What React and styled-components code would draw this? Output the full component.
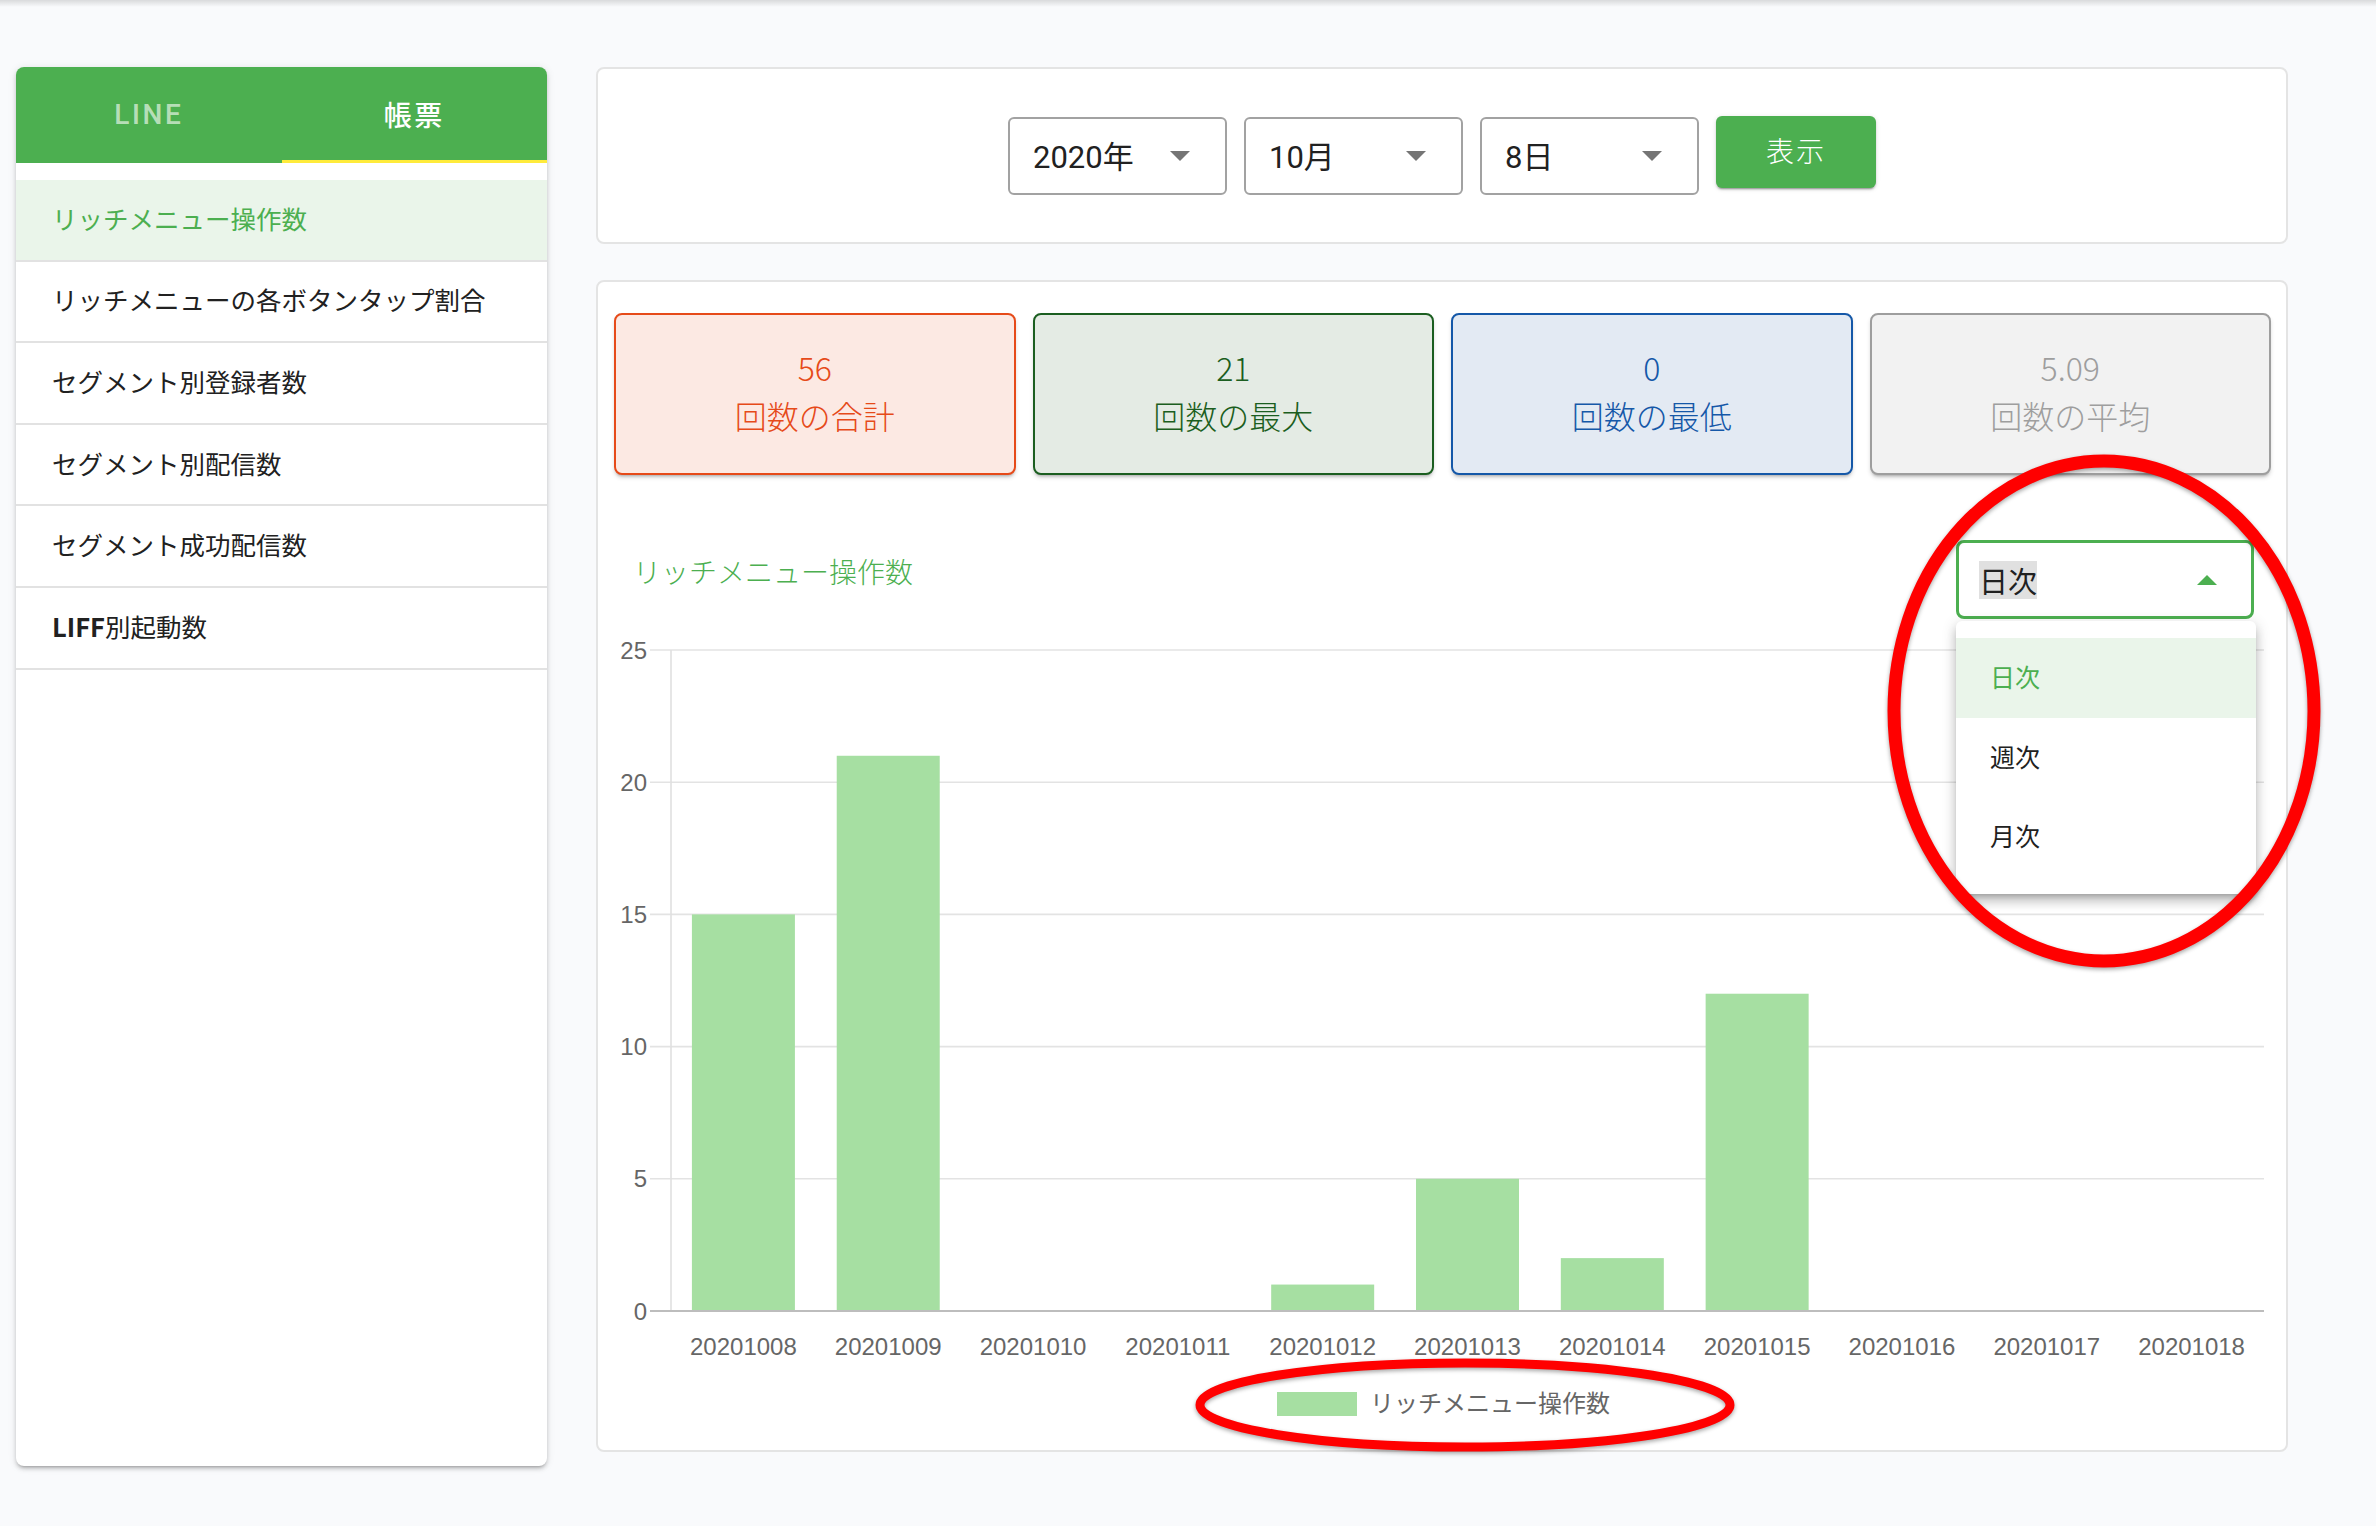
import React from "react";
import styled, { createGlobalStyle } from "styled-components";

const GlobalStyle = createGlobalStyle`
  html, body { margin: 0; padding: 0; }
  body {
    background: #f9fafc;
    font-family: "Noto Sans CJK JP", "Noto Sans", sans-serif;
    color: #212121;
  }
  * { box-sizing: border-box; }
`;

const Page = styled.div`
  position: relative;
  width: 2376px;
  height: 1526px;
  overflow: hidden;
  background: #f9fafc;
`;

const TopShade = styled.div`
  height: 7px;
  background: linear-gradient(rgba(0, 0, 0, 0.13), rgba(0, 0, 0, 0));
`;

const Layout = styled.div`
  display: grid;
  grid-template-columns: 531px 1692px;
  column-gap: 49px;
  padding: 60px 0 0 16px;
  align-items: start;
`;

/* ---------- Sidebar ---------- */
const Sidebar = styled.aside`
  height: 1399px;
  background: #fff;
  border-radius: 8px;
  overflow: hidden;
  box-shadow: 0 3px 3px -2px rgba(0, 0, 0, 0.22), 0 3px 4px 0 rgba(0, 0, 0, 0.14),
    0 1px 8px 0 rgba(0, 0, 0, 0.1);
`;

const TabBar = styled.div`
  display: grid;
  grid-template-columns: 1fr 1fr;
  height: 96px;
  background: #4caf50;
`;

const Tab = styled.div`
  display: flex;
  align-items: center;
  justify-content: center;
  padding-bottom: 2px;
  font-family: Roboto, "Noto Sans CJK JP", sans-serif;
  font-weight: 500;
  font-size: 28px;
  letter-spacing: 2.6px;
  color: ${(p) => (p.$active ? "#ffffff" : "rgba(255,255,255,0.62)")};
  box-shadow: ${(p) => (p.$active ? "inset 0 -3px 0 #ffeb3b" : "none")};
`;

const MenuList = styled.ul`
  list-style: none;
  margin: 0;
  padding: 17px 0 0;
`;

const MenuRow = styled.li`
  display: flex;
  align-items: center;
  height: 81.6px;
  padding: 0 0 5px 36px;
  border-bottom: 2px solid #e2e2e2;
  font-size: 25.5px;
  font-weight: 400;
  color: ${(p) => (p.$active ? "#4caf50" : "#212121")};
  background: ${(p) => (p.$active ? "#eaf5ea" : "#fff")};
`;

const LatinBold = styled.span`
  font-weight: 700;
`;

/* ---------- Main ---------- */
const Main = styled.main`
  display: flex;
  flex-direction: column;
  gap: 36px;
`;

const Card = styled.section`
  position: relative;
  background: #fff;
  border: 2px solid #e4e4e4;
  border-radius: 8px;
`;

const FilterCard = styled(Card)`
  height: 177px;
  display: flex;
  justify-content: center;
  align-items: flex-start;
  gap: 17px;
  padding-top: 48px;
`;

const SelectBox = styled.div`
  width: 219px;
  height: 78px;
  border: 2px solid #a2a2a2;
  border-radius: 6px;
  display: flex;
  align-items: center;
  justify-content: space-between;
  padding: 0 35px 4px 23px;
  font-family: Roboto, "Noto Sans CJK JP", sans-serif;
  font-size: 31px;
  color: #212121;
`;

const ArrowDown = styled.span`
  width: 0;
  height: 0;
  margin-top: 4px;
  border-left: 10px solid transparent;
  border-right: 10px solid transparent;
  border-top: 10px solid #757575;
`;

const ArrowUp = styled.span`
  width: 0;
  height: 0;
  border-left: 10px solid transparent;
  border-right: 10px solid transparent;
  border-bottom: 10px solid #4caf50;
`;

const ShowButton = styled.button`
  width: 160px;
  height: 72px;
  margin-top: -1px;
  padding: 0 0 5px;
  border: none;
  border-radius: 6px;
  background: #4caf50;
  color: #fff;
  font-family: "Noto Sans CJK JP", sans-serif;
  font-size: 28px;
  font-weight: 300;
  letter-spacing: 2px;
  box-shadow: 0 3px 1px -2px rgba(0, 0, 0, 0.2), 0 2px 2px 0 rgba(0, 0, 0, 0.14),
    0 1px 5px 0 rgba(0, 0, 0, 0.12);
`;

const ChartCard = styled(Card)`
  height: 1172px;
`;

const StatRow = styled.div`
  display: grid;
  grid-template-columns: repeat(4, 1fr);
  gap: 17px;
  padding: 31px 15px 0 16px;
`;

const StatBox = styled.div`
  height: 162px;
  border: 2px solid ${(p) => p.$color};
  background: ${(p) => p.$bg};
  border-radius: 8px;
  display: flex;
  flex-direction: column;
  align-items: center;
  justify-content: center;
  padding-bottom: 6px;
  font-size: 32px;
  font-weight: 300;
  line-height: 48px;
  box-shadow: 0 3px 3px -2px rgba(0, 0, 0, 0.25), 0 3px 4px 0 rgba(0, 0, 0, 0.12);
`;

const StatText = styled.span`
  color: ${(p) => p.$color};
`;

const ChartHeader = styled.div`
  display: flex;
  align-items: center;
  justify-content: space-between;
  margin-top: 65px;
  padding: 0 32px 0 35px;
`;

const ChartTitle = styled.h2`
  margin: 0 0 17px;
  font-size: 28px;
  font-weight: 300;
  color: #4caf50;
`;

const PeriodWrap = styled.div`
  position: relative;
`;

const PeriodSelect = styled.div`
  width: 298px;
  height: 79px;
  border: 3px solid #4caf50;
  border-radius: 8px;
  display: flex;
  align-items: center;
  justify-content: space-between;
  padding: 0 34px 0 20px;
`;

const SelectedText = styled.span`
  background: #e0e0e0;
  font-size: 29px;
  font-weight: 400;
  line-height: 38px;
  color: #212121;
`;

const Dropdown = styled.ul`
  position: absolute;
  top: calc(100% + 2px);
  left: 0;
  width: 300px;
  margin: 0;
  padding: 17px 0 17px;
  list-style: none;
  background: #fff;
  border-radius: 6px;
  z-index: 3;
  box-shadow: 0 5px 5px -3px rgba(0, 0, 0, 0.2), 0 8px 10px 1px rgba(0, 0, 0, 0.14),
    0 3px 14px 2px rgba(0, 0, 0, 0.12);
`;

const DropItem = styled.li`
  height: 79.5px;
  display: flex;
  align-items: center;
  padding: 0 0 3px 34px;
  font-size: 25px;
  font-weight: 400;
  color: ${(p) => (p.$active ? "#4caf50" : "#212121")};
  background: ${(p) => (p.$active ? "#eaf5ea" : "transparent")};
`;

const ChartSvg = styled.svg`
  display: block;
  font-family: "Liberation Sans", "Noto Sans CJK JP", sans-serif;
`;

const Annotations = styled.svg`
  position: absolute;
  left: 0;
  top: 0;
  pointer-events: none;
  z-index: 10;
  filter: drop-shadow(0 2px 2px rgba(0, 0, 0, 0.35));
`;

/* ---------- Data ---------- */
const menuItems = [
  "リッチメニュー操作数",
  "リッチメニューの各ボタンタップ割合",
  "セグメント別登録者数",
  "セグメント別配信数",
  "セグメント成功配信数",
];

const stats = [
  { value: "56", label: "回数の合計", color: "#e64a19", bg: "#fce9e3" },
  { value: "21", label: "回数の最大", color: "#1b5e20", bg: "#e4ebe4" },
  { value: "0", label: "回数の最低", color: "#1558a8", bg: "#e3eaf3" },
  { value: "5.09", label: "回数の平均", color: "#9e9e9e", bg: "#f2f2f2" },
];

const labels = [
  "20201008",
  "20201009",
  "20201010",
  "20201011",
  "20201012",
  "20201013",
  "20201014",
  "20201015",
  "20201016",
  "20201017",
  "20201018",
];
const values = [15, 21, 0, 0, 1, 5, 2, 12, 0, 0, 0];

const BAR = "#a6dfa2";

function BarChart() {
  const W = 1688;
  const H = 831;
  const axisX = 73;
  const right = 1666;
  const y0 = 692;
  const yTop = 31;
  const unit = (y0 - yTop) / 25;
  const cat = (right - axisX) / labels.length;
  const bw = 103;
  const ticks = [0, 5, 10, 15, 20, 25];
  return (
    <ChartSvg width={W} height={H} viewBox={`0 0 ${W} ${H}`}>
      {ticks
        .filter((t) => t !== 0)
        .map((t) => (
          <line
            key={t}
            x1={52}
            x2={right}
            y1={y0 - t * unit}
            y2={y0 - t * unit}
            stroke="#e3e3e3"
            strokeWidth={1.6}
          />
        ))}
      <line x1={axisX} x2={axisX} y1={yTop} y2={y0} stroke="#e0e0e0" strokeWidth={1.6} />
      {values.map((v, i) =>
        v > 0 ? (
          <rect
            key={i}
            x={axisX + i * cat + (cat - bw) / 2}
            y={y0 - v * unit}
            width={bw}
            height={v * unit}
            fill={BAR}
          />
        ) : null
      )}
      <line x1={52} x2={right} y1={y0} y2={y0} stroke="#bdbdbd" strokeWidth={1.8} />
      {ticks.map((t) => (
        <text
          key={t}
          x={49}
          y={y0 - t * unit}
          textAnchor="end"
          dominantBaseline="central"
          fill="#666"
          fontSize="24"
        >
          {t}
        </text>
      ))}
      {labels.map((l, i) => (
        <text
          key={l}
          x={axisX + (i + 0.5) * cat}
          y={727}
          textAnchor="middle"
          dominantBaseline="central"
          fill="#666"
          fontSize="24"
        >
          {l}
        </text>
      ))}
      <rect x={679} y={773} width={80} height={24} fill={BAR} />
      <text x={772} y={784} dominantBaseline="central" fill="#666" fontSize="24">
        リッチメニュー操作数
      </text>
    </ChartSvg>
  );
}

export default function App() {
  return (
    <>
      <GlobalStyle />
      <Page>
        <TopShade />
        <Layout>
          <Sidebar>
            <TabBar>
              <Tab>LINE</Tab>
              <Tab $active>帳票</Tab>
            </TabBar>
            <MenuList>
              {menuItems.map((m, i) => (
                <MenuRow key={m} $active={i === 0}>
                  {m}
                </MenuRow>
              ))}
              <MenuRow>
                <LatinBold>LIFF</LatinBold>別起動数
              </MenuRow>
            </MenuList>
          </Sidebar>

          <Main>
            <FilterCard>
              <SelectBox>
                <span>2020年</span>
                <ArrowDown />
              </SelectBox>
              <SelectBox>
                <span>10月</span>
                <ArrowDown />
              </SelectBox>
              <SelectBox>
                <span>8日</span>
                <ArrowDown />
              </SelectBox>
              <ShowButton>表示</ShowButton>
            </FilterCard>

            <ChartCard>
              <StatRow>
                {stats.map((s) => (
                  <StatBox key={s.label} $color={s.color} $bg={s.bg}>
                    <StatText $color={s.color}>{s.value}</StatText>
                    <StatText $color={s.color}>{s.label}</StatText>
                  </StatBox>
                ))}
              </StatRow>
              <ChartHeader>
                <ChartTitle>リッチメニュー操作数</ChartTitle>
                <PeriodWrap>
                  <PeriodSelect>
                    <SelectedText>日次</SelectedText>
                    <ArrowUp />
                  </PeriodSelect>
                  <Dropdown>
                    <DropItem $active>日次</DropItem>
                    <DropItem>週次</DropItem>
                    <DropItem>月次</DropItem>
                  </Dropdown>
                </PeriodWrap>
              </ChartHeader>
              <BarChart />
            </ChartCard>
          </Main>
        </Layout>

        <Annotations width="2376" height="1526" viewBox="0 0 2376 1526">
          <ellipse cx="2104" cy="711" rx="210" ry="250" fill="none" stroke="#ff0000" strokeWidth="13" />
          <ellipse cx="1465" cy="1405" rx="265" ry="42" fill="none" stroke="#ff0000" strokeWidth="9" />
        </Annotations>
      </Page>
    </>
  );
}
